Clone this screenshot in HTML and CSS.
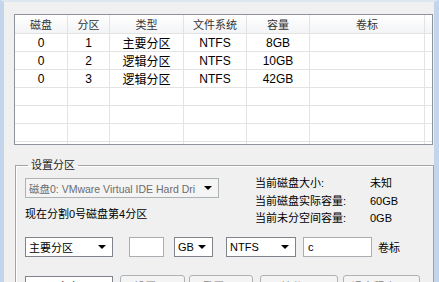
FILE: index.html
```html
<!DOCTYPE html>
<html lang="zh-CN">
<head>
<meta charset="utf-8">
<title>分区工具</title>
<link rel="stylesheet" href="styles.css">
</head>
<body>
<div class="window">
  <div class="list">
    <div class="grid">
      <div class="h">磁盘</div><div class="h">分区</div><div class="h">类型</div><div class="h">文件系统</div><div class="h">容量</div><div class="h">卷标</div><div class="h"></div>
      <div class="c">0</div><div class="c">1</div><div class="c">主要分区</div><div class="c">NTFS</div><div class="c">8GB</div><div class="c"></div><div class="c"></div>
      <div class="c">0</div><div class="c">2</div><div class="c">逻辑分区</div><div class="c">NTFS</div><div class="c">10GB</div><div class="c"></div><div class="c"></div>
      <div class="c">0</div><div class="c">3</div><div class="c">逻辑分区</div><div class="c">NTFS</div><div class="c">42GB</div><div class="c"></div><div class="c"></div>
      <div class="c"></div><div class="c"></div><div class="c"></div><div class="c"></div><div class="c"></div><div class="c"></div><div class="c"></div>
      <div class="c"></div><div class="c"></div><div class="c"></div><div class="c"></div><div class="c"></div><div class="c"></div><div class="c"></div>
      <div class="c"></div><div class="c"></div><div class="c"></div><div class="c"></div><div class="c"></div><div class="c"></div><div class="c"></div>
      <div class="c"></div><div class="c"></div><div class="c"></div><div class="c"></div><div class="c"></div><div class="c"></div><div class="c"></div>
    </div>
  </div>

  <fieldset class="group">
    <legend class="group-title">设置分区</legend>
    <div class="top">
      <div class="left">
        <div class="combo disabled disk"><span>磁盘0: VMware Virtual IDE Hard Dri</span><i class="arrow"></i></div>
        <div class="note">现在分割0号磁盘第4分区</div>
      </div>
      <div class="info">
        <span>当前磁盘大小:</span><span>未知</span>
        <span>当前磁盘实际容量:</span><span>60GB</span>
        <span>当前未分空间容量:</span><span>0GB</span>
      </div>
    </div>
    <div class="row ctrls">
      <div class="combo type"><span>主要分区</span><i class="arrow"></i></div>
      <div class="edit size"></div>
      <div class="combo unit"><span>GB</span><i class="arrow"></i></div>
      <div class="combo fs"><span>NTFS</span><i class="arrow"></i></div>
      <div class="edit label"><span>c</span></div>
      <span class="lbl">卷标</span>
    </div>
    <div class="row btns">
      <div class="combo type"><span>40GB方案</span><i class="arrow"></i></div>
      <div class="btn b1">设置(S)</div>
      <div class="btn b2">重置(C)</div>
      <div class="btn b3">开始分区(F)</div>
      <div class="btn b4">退出程序(Q)</div>
    </div>
  </fieldset>
</div>
</body>
</html>
```

FILE: styles.css
```css
html, body {
  margin: 0;
  padding: 0;
}
body {
  width: 439px;
  height: 282px;
  overflow: hidden;
  font-family: "Liberation Sans", "Noto Sans CJK SC", sans-serif;
  font-size: 11px;
  color: #000;
  background: #f0f0f0;
}
.window {
  box-sizing: border-box;
  width: 439px;
  height: 282px;
  background: #f0f0f0;
  border-left: 4px solid #c2d5eb;
  border-right: 5px solid #c2d5eb;
  border-top: 2px solid #dde7f2;
  padding-top: 12px;
  overflow: hidden;
}
.list {
  box-sizing: border-box;
  width: 419px;
  height: 131px;
  margin-left: 10px;
  border: 1px solid #8e9299;
  background: #fff;
  overflow: hidden;
}
.grid {
  display: grid;
  grid-template-columns: 52px 41px 73px 62px 62px 114px 7px;
  grid-auto-rows: 17px;
  grid-template-rows: 18px;
  gap: 1px;
  background: #e3e3e3;
}
.grid > div {
  background: #fff;
  display: flex;
  align-items: center;
  justify-content: center;
  font-size: 12px;
  white-space: nowrap;
}
.grid > .h {
  background: linear-gradient(#ffffff, #f3f4f6);
  font-size: 11px;
  color: #333;
}
.group {
  box-sizing: border-box;
  width: 419px;
  margin: 13px 0 0 11px;
  padding: 0 0 20px 9px;
  border: 1px solid #a3a3a3;
  box-shadow: inset 1px 1px 0 #fff, 1px 1px 0 #fff;
  min-width: 0;
}
.group-title {
  padding: 0 3px;
  margin-left: 3px;
  line-height: 14px;
  color: #222;
}
.top {
  display: flex;
  align-items: flex-start;
  padding-top: 3px;
}
.left {
  margin-top: 3px;
}
.combo {
  box-sizing: border-box;
  display: flex;
  align-items: center;
  justify-content: space-between;
  height: 20px;
  padding: 0 6px 0 3px;
  border: 1px solid #7f838a;
  background: #fff;
  white-space: nowrap;
  overflow: hidden;
}
.combo.disabled {
  background: #f4f4f4;
  border-color: #adb2b5;
  color: #6d6d6d;
}
.arrow {
  flex: none;
  width: 0;
  height: 0;
  border-left: 4px solid transparent;
  border-right: 4px solid transparent;
  border-top: 4px solid #000;
}
.disk {
  width: 194px;
  font-size: 10.5px;
}
.note {
  margin-top: 9px;
  line-height: 14px;
}
.info {
  display: grid;
  grid-template-columns: 115px auto;
  line-height: 17.5px;
  margin-left: 36px;
}
.row {
  display: flex;
  align-items: center;
}
.ctrls {
  margin-top: 9px;
}
.edit {
  box-sizing: border-box;
  height: 20px;
  border: 1px solid #abadb3;
  background: #fff;
  display: flex;
  align-items: center;
  padding-left: 4px;
}
.type { width: 88px; }
.size { width: 35px; margin-left: 16px; }
.unit { width: 39px; margin-left: 10px; }
.fs { width: 70px; margin-left: 13px; }
.label { width: 69px; margin-left: 7px; }
.lbl { margin-left: 6px; }
.btns {
  margin-top: 18px;
}
.btn {
  box-sizing: border-box;
  height: 23px;
  display: flex;
  align-items: center;
  justify-content: center;
  border: 1px solid #adb2b5;
  border-radius: 3px;
  background: #f4f4f4;
  color: #838383;
  white-space: nowrap;
}
.b1 { width: 65px; margin-left: 7px; }
.b2 { width: 64px; margin-left: 4px; }
.b3 { width: 78px; margin-left: 7px; }
.b4 { width: 77px; margin-left: 5px; }
```
